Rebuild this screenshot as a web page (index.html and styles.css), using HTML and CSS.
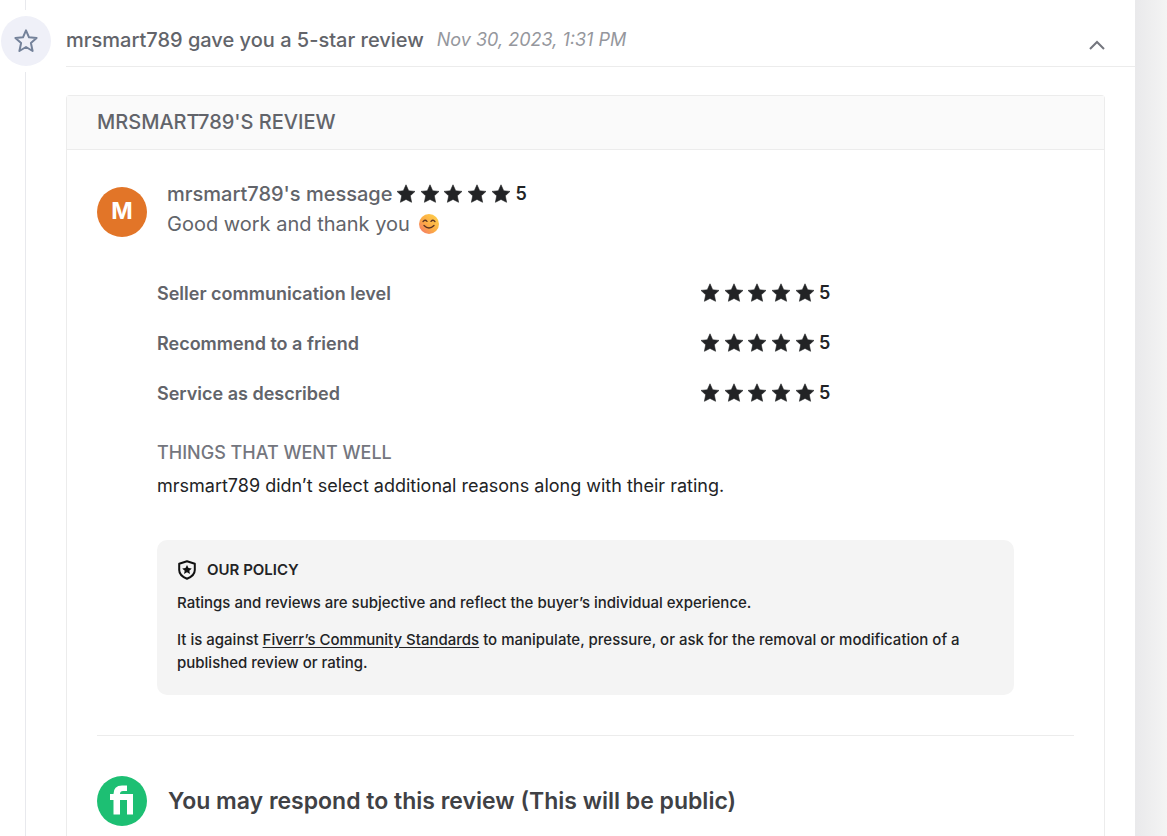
FILE: index.html
```html
<!DOCTYPE html>
<html lang="en">
<head>
<meta charset="utf-8">
<meta name="viewport" content="width=device-width, initial-scale=1">
<title>Order review</title>
<link rel="stylesheet" href="styles.css">
</head>
<body>
<svg class="defs" aria-hidden="true">
  <symbol id="star" viewBox="0 0 20 20"><path d="M10 .8 12.7 6.8 19 7.4 14.3 11.8 15.600 18.300 10 15.400 4.400 18.300 5.700 11.800 1 7.400 7.300 6.800Z" stroke-width=".6" stroke="#222325" stroke-linejoin="round"/></symbol>
  <symbol id="stars" viewBox="0 0 115 20">
    <use href="#star" x="0" width="20" height="20"/><use href="#star" x="24" width="20" height="20"/><use href="#star" x="47" width="20" height="20"/><use href="#star" x="71" width="20" height="20"/><use href="#star" x="95" width="20" height="20"/>
  </symbol>
</svg>
<div class="page">
  <main class="panel">
    <div class="timeline">
      <span class="line line-top"></span>
      <span class="badge">
        <svg width="26" height="26" viewBox="0 0 26 26" aria-hidden="true"><path d="M13 2.4 16 9.3 23.6 10 17.9 15 19.6 23 13 19 6.4 23 8.1 15 2.4 10 10 9.3Z" fill="none" stroke="#74829a" stroke-width="2" stroke-linejoin="round"/></svg>
      </span>
      <span class="line line-rest"></span>
    </div>
    <div class="content">
      <header class="event">
        <h1 class="event-title">mrsmart789 gave you a 5-star review</h1>
        <time class="event-time" datetime="2023-11-30T13:31">Nov 30, 2023, 1:31 PM</time>
        <button class="toggle" type="button" aria-label="Collapse" aria-expanded="true">
          <svg width="18" height="12" viewBox="0 0 18 12" aria-hidden="true"><path d="M2 10 9 3 16 10" fill="none" stroke="#74767e" stroke-width="2"/></svg>
        </button>
      </header>
      <section class="card">
        <h2 class="card-title">MRSMART789'S REVIEW</h2>
        <div class="card-body">
          <div class="message">
            <span class="avatar avatar-user">M</span>
            <div class="message-text">
              <div class="message-head">
                <h3 class="message-from">mrsmart789's message</h3>
                <span class="rating"><svg class="stars" role="img" aria-label="5 stars"><use href="#stars"/></svg><b class="score">5</b></span>
              </div>
              <p class="message-body">Good work and thank you
                <svg class="emoji" width="20" height="20" viewBox="0 0 20 20" role="img" aria-label="Smiling face">
                  <defs><linearGradient id="face" x1="0" y1="1" x2="1" y2="0"><stop offset="0" stop-color="#f4706e"/><stop offset=".45" stop-color="#fbab45"/><stop offset="1" stop-color="#ffd54c"/></linearGradient></defs>
                  <circle cx="10" cy="10" r="10" fill="url(#face)"/>
                  <path d="M4 7.6Q6 5 8 7.4M12 7.4Q14 5 16 7.600M5 11.500Q10 16.500 15 11.500" fill="none" stroke="#5b3322" stroke-width="1.3" stroke-linecap="round"/>
                </svg>
              </p>
            </div>
          </div>
          <div class="details">
            <dl class="scores">
              <div class="score-row"><dt>Seller communication level</dt><dd class="rating"><svg class="stars" role="img" aria-label="5 stars"><use href="#stars"/></svg><b class="score">5</b></dd></div>
              <div class="score-row"><dt>Recommend to a friend</dt><dd class="rating"><svg class="stars" role="img" aria-label="5 stars"><use href="#stars"/></svg><b class="score">5</b></dd></div>
              <div class="score-row"><dt>Service as described</dt><dd class="rating"><svg class="stars" role="img" aria-label="5 stars"><use href="#stars"/></svg><b class="score">5</b></dd></div>
            </dl>
            <h3 class="well-title">THINGS THAT WENT WELL</h3>
            <p class="well-text">mrsmart789 didn’t select additional reasons along with their rating.</p>
            <aside class="policy">
              <h3 class="policy-title">
                <svg width="20" height="20" viewBox="0 0 20 20" aria-hidden="true"><path d="M10 1.3 17.8 3.8V10Q17.8 15.6 10 18.8 2.2 15.6 2.2 10V3.8Z" fill="none" stroke="#111" stroke-width="2" stroke-linejoin="round"/><path d="M10 5 11.500 8.1 14.800 8.500 12.300 10.700 13 14 10 12.300 7 14 7.700 10.700 5.200 8.500 8.500 8.100Z" fill="#111"/></svg>
                OUR POLICY
              </h3>
              <p class="policy-text">Ratings and reviews are subjective and reflect the buyer’s individual experience.</p>
              <p class="policy-text">It is against <a href="#standards">Fiverr’s Community Standards</a> to manipulate, pressure, or ask for the removal or modification of a published review or rating.</p>
            </aside>
          </div>
          <div class="respond">
            <span class="avatar avatar-brand">
              <svg width="50" height="50" viewBox="0 0 50 50" role="img" aria-label="Fiverr"><path d="M13 18H16.500Q16.500 9.500 25 9.500H30V15H26Q23 15 23 18H36V38.500H30V24H23V38.500H16.500V24H13Z" fill="#fff"/></svg>
            </span>
            <h2 class="respond-title">You may respond to this review (This will be public)</h2>
          </div>
        </div>
      </section>
    </div>
  </main>
  <div class="gutter"></div>
</div>
</body>
</html>
```
FILE: styles.css
```css
* { box-sizing: border-box; }
body { margin: 0; font-family: Inter, "Liberation Sans", sans-serif; color: #222325; background: #f4f4f4; }
h1, h2, h3, p, dl, dd { margin: 0; }
.defs { position: absolute; width: 0; height: 0; }
.page { display: flex; height: 100vh; overflow: hidden; }
.panel { flex: 1; display: flex; gap: 15px; background: #fff; }
.gutter { width: 32px; background: linear-gradient(90deg, #e9e9eb, #f4f4f4); }
.timeline { width: 51px; display: flex; flex-direction: column; align-items: center; }
.line { width: 1px; background: #e8e9ed; }
.line-top { height: 10px; }
.line-rest { flex: 1; }
.badge { width: 50px; height: 50px; margin: 6px 0; border-radius: 50%; background: #eff0f8; display: flex; align-items: center; justify-content: center; }
.content { flex: 1; display: flex; flex-direction: column; }
.event { display: flex; align-items: center; height: 67px; padding: 14px 29px 0 0; border-bottom: 1px solid #ececec; margin-bottom: 28px; flex: none; }
.event-title { font-size: 20px; line-height: 28px; font-weight: 500; color: #62646a; }
.event-time { margin-left: 13px; font-size: 18px; line-height: 28px; font-style: italic; color: #95979d; }
.toggle { margin-left: auto; padding: 9px 0 0; border: 0; background: none; display: flex; }
.card { flex: 1 0 auto; margin-right: 30px; border: 1px solid #ececec; border-bottom: 0; border-radius: 4px 4px 0 0; }
.card-title { padding: 12px 30px 13px; border-bottom: 1px solid #ececec; background: #fafafa; font-size: 20px; line-height: 28px; font-weight: 500; color: #62646a; }
.card-body { padding: 29px 30px 0; }
.message { display: flex; align-items: flex-start; gap: 20px; }
.avatar { width: 50px; height: 50px; border-radius: 50%; flex: none; display: flex; align-items: center; justify-content: center; }
.avatar-user { margin-top: 8px; background: #e27528; color: #fff; font-size: 23px; font-weight: 700; line-height: 46px; padding-bottom: 2px; }
.avatar-brand { background: #1dbf73; }
.message-head { display: flex; align-items: center; gap: 4px; }
.message-from, .message-body { font-size: 20px; line-height: 30px; color: #62646a; }
.message-from { font-weight: 500; }
.message-body { font-weight: 400; }
.emoji { vertical-align: -3px; margin-left: 4px; }
.rating { display: flex; align-items: center; gap: 4px; color: #222325; }
.stars { width: 115px; height: 20px; fill: #222325; }
.score { font-size: 18px; line-height: 24px; font-weight: 600; }
.details { padding: 0 60px; }
.scores { margin-top: 29px; }
.score-row { display: grid; grid-template-columns: 543px 1fr; align-items: center; height: 50px; font-size: 18px; font-weight: 600; color: #62646a; }
.well-title { margin-top: 21px; font-size: 18px; line-height: 28px; font-weight: 500; color: #74767e; }
.well-text { margin-top: 5px; font-size: 18px; line-height: 28px; }
.policy { margin-top: 40px; padding: 18px 20px 21px; border-radius: 10px; background: #f4f4f4; }
.policy-title { display: flex; align-items: center; gap: 10px; font-size: 15px; line-height: 23px; font-weight: 600; }
.policy-text { margin-top: 14px; font-size: 15px; line-height: 23px; font-weight: 500; }
.policy-title + .policy-text { margin-top: 10px; }
.policy a { color: inherit; text-underline-offset: 2px; }
.respond { display: flex; align-items: center; gap: 21px; margin-top: 40px; padding: 40px 0 10px; border-top: 1px solid #ececec; }
.respond-title { font-size: 23px; line-height: 30px; font-weight: 600; color: #404145; }
```
